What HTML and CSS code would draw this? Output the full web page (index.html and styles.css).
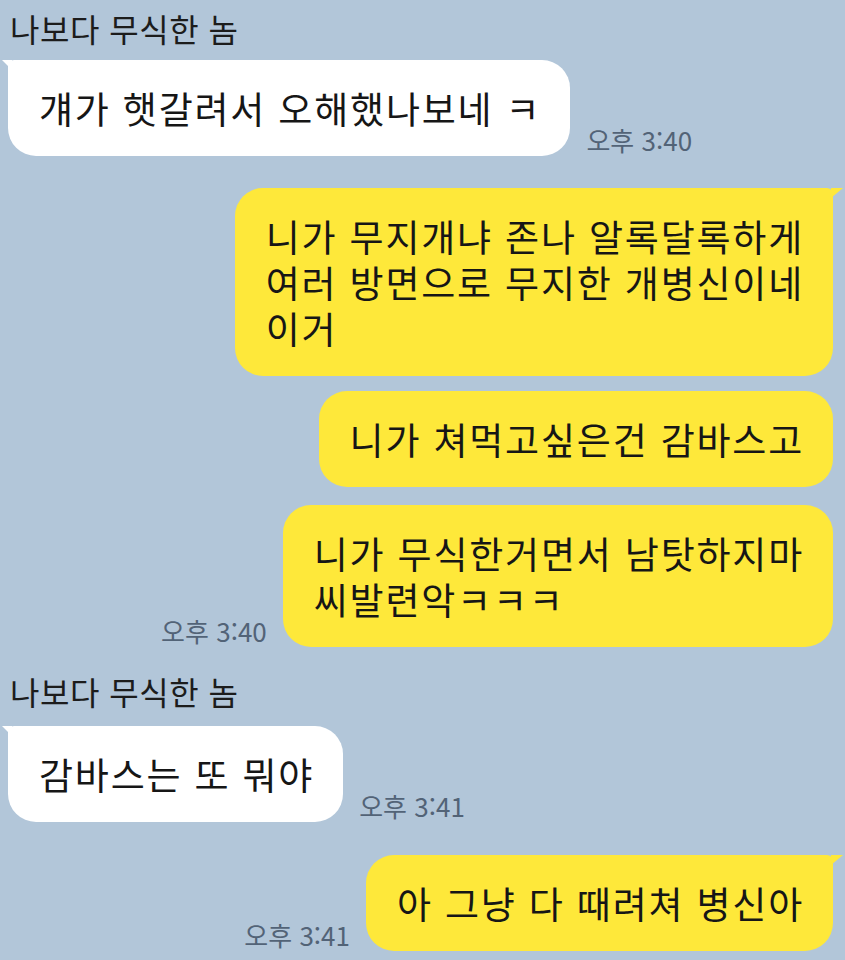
FILE: index.html
```html
<!DOCTYPE html>
<html lang="ko">
<head>
<meta charset="utf-8">
<link rel="stylesheet" href="styles.css">
</head>
<body>
<div class="chat">
  <div class="name n1">나보다 무식한 놈</div>
  <div class="row left r1">
    <div class="bubble white tail">걔가 햇갈려서 오해했나보네 ㅋ</div>
    <div class="time">오후 3:40</div>
  </div>
  <div class="row right r2">
    <div class="bubble yellow tail">
      <span class="line">니가 무지개냐 존나 알록달록하게</span>
      <span class="line">여러 방면으로 무지한 개병신이네</span>
      <span class="line">이거</span>
    </div>
  </div>
  <div class="row right r3">
    <div class="bubble yellow">니가 쳐먹고싶은건 감바스고</div>
  </div>
  <div class="row right r4">
    <div class="time">오후 3:40</div>
    <div class="bubble yellow">
      <span class="line">니가 무식한거면서 남탓하지마</span>
      <span class="line">씨발련악ㅋㅋㅋ</span>
    </div>
  </div>
  <div class="name n2">나보다 무식한 놈</div>
  <div class="row left r5">
    <div class="bubble white tail">감바스는 또 뭐야</div>
    <div class="time">오후 3:41</div>
  </div>
  <div class="row right r6">
    <div class="time">오후 3:41</div>
    <div class="bubble yellow tail">아 그냥 다 때려쳐 병신아</div>
  </div>
</div>
</body>
</html>
```
FILE: styles.css
```css
html, body {
  margin: 0;
  padding: 0;
  background: #b2c6d9;
}
body {
  width: 845px;
  height: 960px;
  overflow: hidden;
  font-family: "Noto Sans CJK KR", "Noto Sans", sans-serif;
  color: #161616;
}
.chat {
  display: flex;
  flex-direction: column;
  padding: 0 12px 0 8px;
}
.name {
  font-size: 32px;
  line-height: 40px;
  padding-left: 2px;
  letter-spacing: 0.5px;
  color: #1c1c1c;
}
.n1 { margin-top: 8px; }
.n2 { margin-top: 24px; }
.row {
  display: flex;
  align-items: flex-end;
  gap: 16px;
}
.row.right { justify-content: flex-end; }
.r1 { margin-top: 12px; }
.r2 { margin-top: 32px; }
.r3 { margin-top: 15px; }
.r4 { margin-top: 18px; }
.r5 { margin-top: 15px; }
.r6 { margin-top: 33px; }
.bubble {
  position: relative;
  font-size: 37px;
  line-height: 46px;
  padding: 25px 29px 25px 31px;
  border-radius: 28px;
  letter-spacing: 1.8px;
}
.line {
  display: block;
  height: 46px;
  white-space: nowrap;
}
.white { background: #ffffff; }
.yellow { background: #fee83a; }
.left .bubble.tail { border-top-left-radius: 6px; }
.right .bubble.tail { border-top-right-radius: 6px; }
.left .bubble.tail::before {
  content: "";
  position: absolute;
  left: -6px;
  top: 0;
  border-top: 10px solid #ffffff;
  border-left: 10px solid transparent;
}
.right .bubble.tail::before {
  content: "";
  position: absolute;
  right: -10px;
  top: 0;
  border-top: 10px solid #fee83a;
  border-right: 12px solid transparent;
}
.time {
  font-size: 26px;
  line-height: 30px;
  color: #526377;
  padding-bottom: 1px;
  white-space: nowrap;
}
```
